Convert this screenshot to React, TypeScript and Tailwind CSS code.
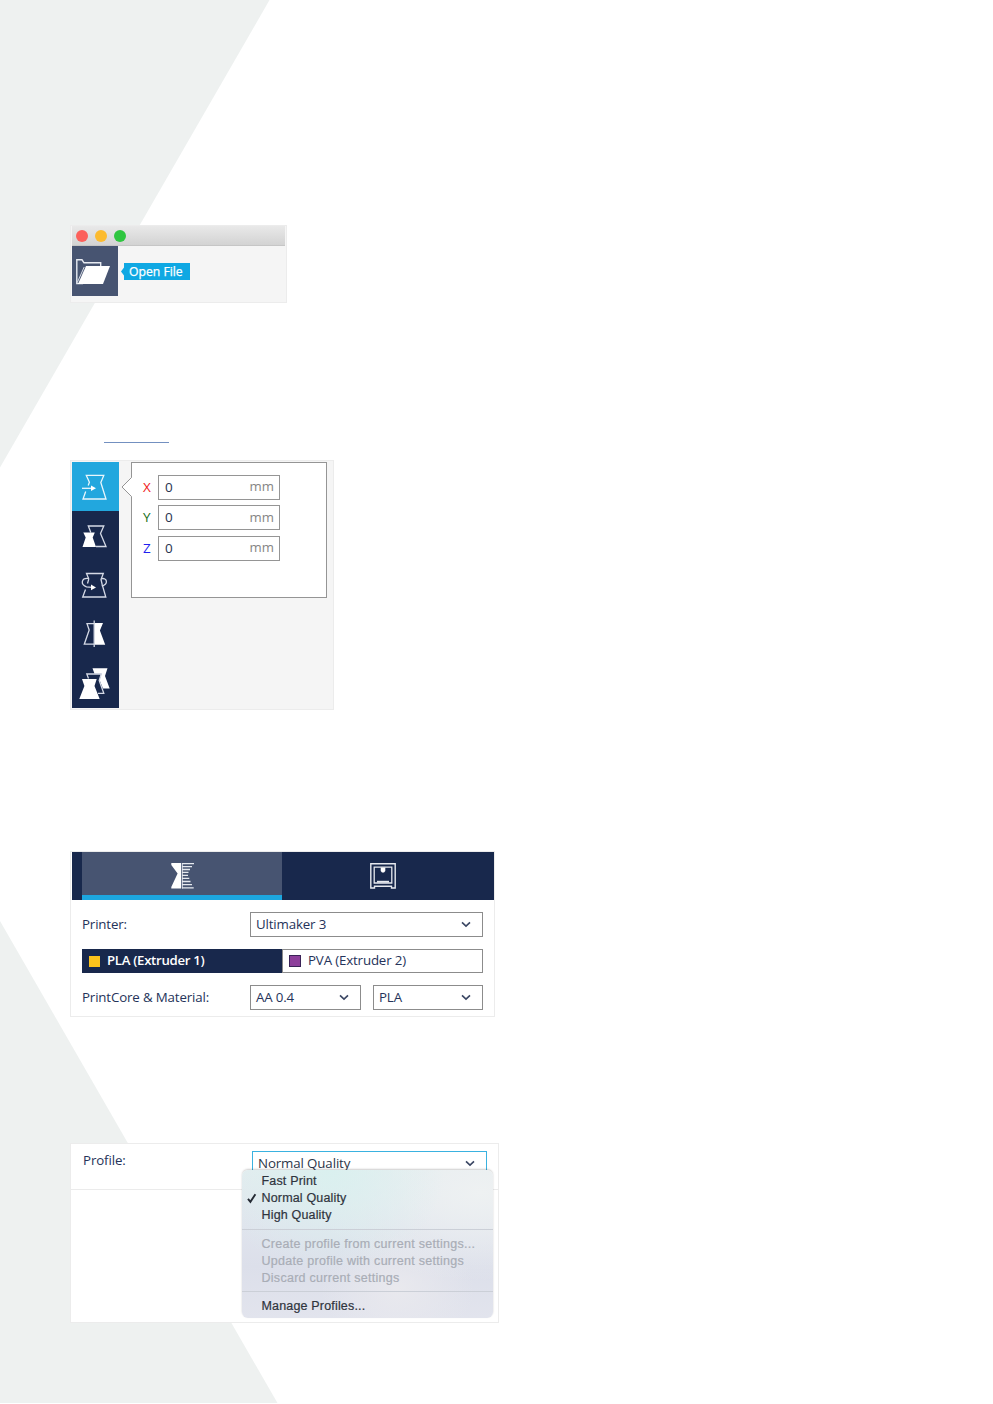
import React from "react";

const OPEN = "font-['Open_Sans',sans-serif]";

function Backdrop() {
  return (
    <svg className="absolute inset-0" width="993" height="1404" viewBox="0 0 993 1404" aria-hidden="true">
      <path d="M0 0H269.5L0 467.5Z" fill="#eef1f0" />
      <path d="M0 921L277.5 1403H0Z" fill="#eef1f0" />
    </svg>
  );
}

function OpenFilePanel() {
  return (
    <section className="flex h-[78px] w-[217px] flex-col border border-[#ececec] bg-[#f5f5f5] px-px">
      <div className="flex h-5 shrink-0 items-center gap-[7px] border-b border-[#c6c6c6] bg-linear-to-b from-[#e9e9e9] to-[#d3d3d3] pl-1">
        <span className="size-3 rounded-full bg-[#fc605b]" />
        <span className="size-3 rounded-full bg-[#fcbb2f]" />
        <span className="size-3 rounded-full bg-[#2fc640]" />
      </div>
      <div className="flex">
        <div className="h-[50px] w-[46px] bg-[#475471]">
          <svg width="46" height="50" viewBox="72 246 46 50" fill="none">
            <path d="M83 283.6H76.8V259.8H82L84 262.8H100.7V266" stroke="#e8ebf2" strokeWidth="1.4" />
            <path d="M77.3 282.5L84.2 267" stroke="#e8ebf2" strokeWidth="0.9" />
            <path d="M86 266H110L103 284H78Z" fill="#fff" />
          </svg>
        </div>
        <div className="mt-[17px] ml-[3px] flex items-start">
          <svg width="3" height="17" viewBox="0 0 3 17"><path d="M3 4.5L0 8.5L3 12.5Z" fill="#0fa8e3" /></svg>
          <div className={`${OPEN} h-[17px] w-[66px] bg-[#0fa8e3] pl-[5px] text-[12.2px] leading-[17px] whitespace-nowrap text-white [-webkit-text-stroke:0.25px]`}>Open File</div>
        </div>
      </div>
    </section>
  );
}

function MoveIcon() {
  return (
    <svg width="47" height="49" viewBox="72 462 47 49" fill="none" stroke="#e9f6fc" strokeWidth="1.3">
      <path d="M88.2 485.5L89.4 482.3L86.3 475.4H103.8L100.8 482.5L106 499H83L85.7 491.5" />
      <path d="M82 488.3H92" />
      <path d="M91 485.5L96 488.3L91 491.1Z" fill="#fff" stroke="none" />
    </svg>
  );
}

function ScaleIcon() {
  return (
    <svg width="47" height="49" viewBox="72 511 47 49" fill="none" stroke="#d5dae6" strokeWidth="1.3">
      <path d="M90.8 532.5L88.3 526H103.8L100.5 533.5L106 546.5H96" />
      <path d="M83.3 532.5H94.8L92.7 537.5L96 547H82.5L85.7 537.5Z" fill="#fff" stroke="none" />
    </svg>
  );
}

function RotateIcon() {
  return (
    <svg width="47" height="49" viewBox="72 560 47 49" fill="none" stroke="#d5dae6" strokeWidth="1.3">
      <path d="M88.8 579L86.5 573.5H103.3L101 579.5L102.3 585L105.8 597H82.7L85.5 589.5" />
      <path d="M89 578.6C81 577.5 80.2 584.5 86.5 586.8L92 587.4M88.8 579L87.5 583.5M101 578.8C107.5 577 108.5 584.5 101.8 586" />
      <path d="M91 584.5L96 587.4L91 590.3Z" fill="#fff" stroke="none" />
    </svg>
  );
}

function MirrorIcon() {
  return (
    <svg width="47" height="49" viewBox="72 609 47 49" fill="none" stroke="#d5dae6" strokeWidth="1.3">
      <path d="M94 623.6H87L89.2 630L84.3 644.2H94" />
      <path d="M94.2 620.5V647" />
      <path d="M94.6 623H103L99.9 630.5L105.2 644.8H94.6Z" fill="#fff" stroke="none" />
    </svg>
  );
}

function PerModelIcon() {
  return (
    <svg width="47" height="50" viewBox="72 658 47 50" fill="none" stroke="#d5dae6" strokeWidth="1.3">
      <path d="M92.5 668.2H107.5L105 676L109.7 688.5H103L99.5 680L101.5 673.7H94.5Z" fill="#fff" stroke="none" />
      <path d="M88.5 678.5L86.8 674H101.3L99.2 680.5L103.8 693.3H98" />
      <path d="M82 679H96.7L94.5 686L99.7 699H79.3L84.4 686Z" fill="#fff" stroke="none" />
    </svg>
  );
}

function AxisField({ axis, color }: { axis: string; color: string }) {
  return (
    <div className="flex h-[25px] items-center">
      <span className={`w-[15px] text-[13.5px] ${color}`}>{axis}</span>
      <div className="flex h-[25px] w-[122px] items-center justify-between border border-[#959595] bg-white pr-[5px] pl-1.5 text-[13.5px]">
        <span className="text-[#283450]">0</span>
        <span className="text-[13.2px] text-[#858585]">mm</span>
      </div>
    </div>
  );
}

function MovePanel() {
  return (
    <section className="flex h-[250px] w-[264px] border border-[#ececec] bg-[#f5f5f5] pt-px pl-px">
      <nav className="flex h-[246px] w-[47px] flex-col bg-[#18284c]">
        <div className="bg-[#22a7de]"><MoveIcon /></div>
        <ScaleIcon />
        <RotateIcon />
        <MirrorIcon />
        <PerModelIcon />
      </nav>
      <div className={`${OPEN} relative ml-3 flex h-[136px] w-[196px] flex-col gap-[5.5px] border border-[#959595] bg-white pt-[11.5px] pl-[11px]`}>
        <svg className="absolute top-[11px] -left-[11px]" width="12" height="24" viewBox="0 0 12 24">
          <path d="M12 .5H10.5V3.5L1 13L10.5 22.5V24H12Z" fill="#fff" />
          <path d="M10.5 0V3.5L1 13L10.5 22.5V24" fill="none" stroke="#959595" />
        </svg>
        <AxisField axis="X" color="text-[#f02020]" />
        <AxisField axis="Y" color="text-[#207020]" />
        <AxisField axis="Z" color="text-[#2020f0]" />
      </div>
    </section>
  );
}

function Chevron() {
  return (
    <svg width="10" height="7" viewBox="0 0 10 7" fill="none">
      <path d="M1 1.4L5 5.1L9 1.4" stroke="#3a4663" strokeWidth="1.6" />
    </svg>
  );
}

function Select({ value, width }: { value: string; width: string }) {
  return (
    <div className={`flex h-[25px] items-center justify-between border border-[#8c8c8c] pr-[11px] pl-[5px] ${width}`}>
      <span>{value}</span>
      <Chevron />
    </div>
  );
}

function PrinterPanel() {
  return (
    <section className={`${OPEN} h-[166px] w-[425px] border border-[#ececec] bg-white pl-px text-[13.3px] tracking-[-0.15px] text-[#25335a]`}>
      <div className="flex h-12 bg-[#18284c] pl-2.5">
        <div className="flex h-12 w-[200px] justify-center border-b-[5px] border-[#1ca6df] bg-[#475471]">
          <svg width="26" height="43" viewBox="169 852 26 43" fill="none">
            <path d="M171.3 863H181.2V888.5H171.3V887L177.6 873.5L171.3 865Z" fill="#fff" />
            <path d="M182.5 863V888.5" stroke="#c9cfda" strokeWidth="0.9" />
            <path d="M182 863.7H194M182 866.6H192M182 869.5H190M182 872.4H188.5M182 875.3H188M182 878.4H189.3M182 881.5H190.5M182 884.6H192M182 887.8H193.7" stroke="#e6e9ef" strokeWidth="1.3" />
          </svg>
        </div>
        <div className="flex h-12 flex-1 justify-center pr-2.5">
          <svg width="28" height="48" viewBox="369 852 28 48" fill="none" stroke="#e6e9ef">
            <path d="M370.8 863.8H395.2V888H391.5V886.2H374.5V888H370.8Z" strokeWidth="1.4" />
            <path d="M374.2 867.2H391.8V883H374.2Z" strokeWidth="1.3" />
            <path d="M377 881.7H389" strokeWidth="1.8" />
            <path d="M380.7 867.5H385.3V871L384 872.6H382L380.7 871Z" fill="#fff" stroke="none" />
          </svg>
        </div>
      </div>
      <div className="flex flex-col gap-3 pt-3 pl-2.5">
        <div className="flex items-center">
          <span className="w-[168px]">Printer:</span>
          <Select value="Ultimaker 3" width="w-[233px]" />
        </div>
        <div className="flex h-6 w-[401px]">
          <div className="flex w-[200px] items-center gap-[7px] bg-[#18284c] pl-[7px] text-white">
            <span className="size-[11px] bg-[#fcc31c]" />
            <span className="text-[13.2px] font-semibold tracking-[-0.3px]">PLA (Extruder 1)</span>
          </div>
          <div className="flex flex-1 items-center gap-[7px] border border-[#8c8c8c] pl-1.5">
            <span className="size-3 border border-[#3a2357] bg-[#8d3f9b]" />
            <span>PVA (Extruder 2)</span>
          </div>
        </div>
        <div className="flex items-center">
          <span className="w-[168px]">PrintCore &amp; Material:</span>
          <Select value="AA 0.4" width="w-[111px]" />
          <span className="w-3" />
          <Select value="PLA" width="w-[110px]" />
        </div>
      </div>
    </section>
  );
}

function ProfilePanel() {
  return (
    <section className={`${OPEN} relative h-[180px] w-[429px] border border-[#ececec] bg-white text-[13.3px] tracking-[-0.12px] text-[#25335a]`}>
      <div className="flex h-[46px] border-b border-[#ebebeb] pt-[7px] pl-3">
        <span className="w-[169px] leading-[19px]">Profile:</span>
        <div className="flex h-[25px] w-[235px] items-center justify-between border border-[#3ab2e0] pr-[11px] pl-[5px] text-[#2c3548]">
          <span>Normal Quality</span>
          <Chevron />
        </div>
      </div>
      <div className="absolute top-[26px] left-[171px] h-[148px] w-[251px] rounded-[6px] bg-[radial-gradient(ellipse_at_35%_0%,#daf0ef_0%,transparent_50%),radial-gradient(ellipse_at_95%_15%,#eef1f2_0%,transparent_50%),radial-gradient(ellipse_at_62%_80%,#e9e9ee_0%,transparent_35%),linear-gradient(180deg,#e4ecef_0%,#e0e4ed_38%,#dcdfea_65%,#e2e4ed_100%)] pt-[3px] font-['Liberation_Sans',sans-serif] text-[12.5px] leading-[17px] tracking-[0.17px] whitespace-nowrap text-[#2f343d] shadow-[0_-1px_2px_rgba(0,0,0,0.2)] [-webkit-text-stroke:0.2px]">
        <div className="pl-[19.5px]">Fast Print</div>
        <div className="flex">
          <span className="flex w-[19.5px] items-center pl-[5px]">
            <svg width="10" height="11" viewBox="0 0 10 11" fill="none"><path d="M1 5.8L3.4 8.8L8.4 1.2" stroke="#242a33" strokeWidth="1.9" /></svg>
          </span>
          Normal Quality
        </div>
        <div className="pl-[19.5px]">High Quality</div>
        <div className="mt-[5px] mb-1.5 h-px bg-[#cbcfd7]" />
        <div className="pl-[19.5px] tracking-[0.28px] text-[#a9adb6]">
          <div>Create profile from current settings...</div>
          <div>Update profile with current settings</div>
          <div>Discard current settings</div>
        </div>
        <div className="mt-1 mb-1.5 h-px bg-[#cbcfd7]" />
        <div className="pl-[19.5px]">Manage Profiles...</div>
      </div>
    </section>
  );
}

export default function App() {
  return (
    <main className="relative h-[1404px] w-[993px] overflow-hidden bg-white">
      <Backdrop />
      <div className="relative flex flex-col items-start pt-[225px] pl-[70px]">
        <OpenFilePanel />
        <div className="mt-[139px] ml-[34px] h-px w-[65px] bg-[#7390c0]" />
        <div className="mt-[17px]"><MovePanel /></div>
        <div className="mt-[141px]"><PrinterPanel /></div>
        <div className="mt-[126px]"><ProfilePanel /></div>
      </div>
    </main>
  );
}
